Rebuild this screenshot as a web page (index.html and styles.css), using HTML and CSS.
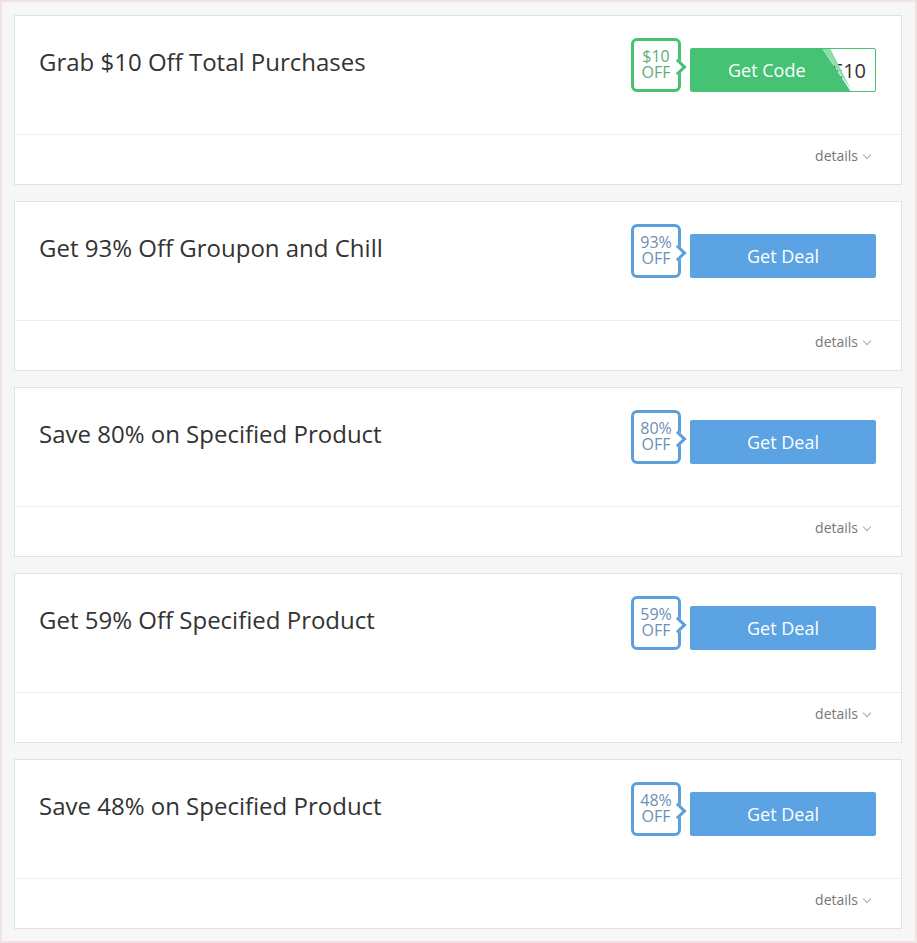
FILE: index.html
```html
<!DOCTYPE html>
<html lang="en">
<head>
<meta charset="utf-8">
<title>Coupons</title>
<link rel="stylesheet" href="styles.css">
</head>
<body>
<div class="list">
  <div class="card">
    <div class="card-main">
      <h3 class="title">Grab $10 Off Total Purchases</h3>
      <div class="actions">
        <div class="badge badge-green"><span>$10</span><span>OFF</span></div>
        <div class="code-btn">
          <span class="code">E10</span>
          <span class="cover">Get Code</span>
          <span class="peel"></span>
        </div>
      </div>
    </div>
    <div class="card-foot"><span class="details">details</span><span class="chev"></span></div>
  </div>
  <div class="card">
    <div class="card-main">
      <h3 class="title">Get 93% Off Groupon and Chill</h3>
      <div class="actions">
        <div class="badge badge-blue"><span>93%</span><span>OFF</span></div>
        <div class="deal-btn">Get Deal</div>
      </div>
    </div>
    <div class="card-foot"><span class="details">details</span><span class="chev"></span></div>
  </div>
  <div class="card">
    <div class="card-main">
      <h3 class="title">Save 80% on Specified Product</h3>
      <div class="actions">
        <div class="badge badge-blue"><span>80%</span><span>OFF</span></div>
        <div class="deal-btn">Get Deal</div>
      </div>
    </div>
    <div class="card-foot"><span class="details">details</span><span class="chev"></span></div>
  </div>
  <div class="card">
    <div class="card-main">
      <h3 class="title">Get 59% Off Specified Product</h3>
      <div class="actions">
        <div class="badge badge-blue"><span>59%</span><span>OFF</span></div>
        <div class="deal-btn">Get Deal</div>
      </div>
    </div>
    <div class="card-foot"><span class="details">details</span><span class="chev"></span></div>
  </div>
  <div class="card">
    <div class="card-main">
      <h3 class="title">Save 48% on Specified Product</h3>
      <div class="actions">
        <div class="badge badge-blue"><span>48%</span><span>OFF</span></div>
        <div class="deal-btn">Get Deal</div>
      </div>
    </div>
    <div class="card-foot"><span class="details">details</span><span class="chev"></span></div>
  </div>
</div>
</body>
</html>
```
FILE: styles.css
```css
* { box-sizing: border-box; }
html, body { height: 100%; }
body {
  margin: 0;
  background: #f6f6f6;
  border: 2px solid #f1e3e3;
  font-family: "Open Sans", "Liberation Sans", sans-serif;
  color: #333;
  padding: 13px 13px 13px 12px;
}
.list {
  display: flex;
  flex-direction: column;
  gap: 16px;
}
.card {
  background: #fff;
  border: 1px solid #e2e2e2;
  height: 170px;
  display: flex;
  flex-direction: column;
}
.card-main {
  height: 119px;
  border-bottom: 1px solid #eeeeee;
  display: flex;
  justify-content: space-between;
  align-items: flex-start;
  padding: 22px 25px 0 24px;
}
.title {
  margin: 8px 0 0 0;
  font-size: 24px;
  line-height: 32px;
  font-weight: 400;
  color: #333;
}
.actions {
  display: flex;
  align-items: flex-end;
  gap: 9px;
}
.badge {
  position: relative;
  width: 50px;
  height: 54px;
  border: 3px solid;
  border-radius: 6px;
  background: #fff;
  font-size: 16px;
  text-align: center;
  display: flex;
  flex-direction: column;
  align-items: center;
  padding-top: 7px;
}
.badge span {
  display: block;
  height: 16px;
  line-height: 16px;
}
.badge::after {
  content: "";
  position: absolute;
  right: -6px;
  top: 50%;
  width: 9px;
  height: 9px;
  margin-top: -4.5px;
  background: #fff;
  border-top: 3px solid;
  border-right: 3px solid;
  border-color: inherit;
  transform: rotate(45deg);
}
.badge-green { border-color: #45c274; color: #5fae77; }
.badge-blue { border-color: #5b9fdc; color: #6e8fb5; }
.deal-btn {
  width: 186px;
  height: 44px;
  background: #5ba3e2;
  color: #fff;
  border-radius: 2px;
  font-size: 18px;
  display: flex;
  align-items: center;
  justify-content: center;
}
.code-btn {
  position: relative;
  width: 186px;
  height: 44px;
  border: 1px solid #45c274;
  border-radius: 2px;
  background: #fff;
  display: flex;
  align-items: center;
  justify-content: flex-end;
  padding-right: 9px;
  overflow: hidden;
}
.code {
  font-size: 20px;
  color: #333;
}
.cover {
  position: absolute;
  left: -1px;
  top: -1px;
  bottom: -1px;
  width: 161px;
  background: #45c274;
  color: #fff;
  font-size: 18px;
  display: flex;
  align-items: center;
  padding-left: 38px;
  clip-path: polygon(0 0, 132px 0, 100% 100%, 0 100%);
}
.peel {
  position: absolute;
  left: 131px;
  top: -1px;
  width: 29px;
  height: 44px;
  background: #8fdcab;
  clip-path: polygon(0 0, 8px 0, 100% 95%);
}
.card-foot {
  flex: 1;
  display: flex;
  justify-content: flex-end;
  align-items: center;
  padding: 0 31px 8px 0;
  gap: 6px;
}
.details {
  font-size: 14px;
  color: #777;
}
.chev {
  width: 6px;
  height: 6px;
  border-right: 1px solid #aaa;
  border-bottom: 1px solid #aaa;
  transform: rotate(45deg);
  margin-top: -2px;
}
```
